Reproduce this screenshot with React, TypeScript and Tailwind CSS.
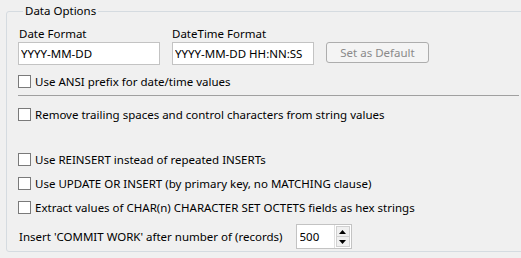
import { useState } from 'react';

const font = { fontFamily: '"Noto Sans", "Open Sans", sans-serif' };

function Check({ label }: { label: string }) {
  const [on, setOn] = useState(false);
  return (
    <label className="flex h-[13px] items-center gap-[4px] whitespace-nowrap">
      <span
        onClick={() => setOn(!on)}
        className="flex h-[13px] w-[13px] shrink-0 items-center justify-center border border-[#7a7a7a] bg-white text-[10px] leading-none"
      >
        {on ? '✓' : ''}
      </span>
      <span className="leading-[16px]">{label}</span>
    </label>
  );
}

export default function App() {
  return (
    <div
      className="h-[258px] w-[521px] overflow-hidden bg-[#f0f0f0] text-[11.5px] text-black"
      style={font}
    >
      <fieldset className="ml-[6px] mt-[3px] h-[249px] w-[540px] rounded-[3px] border border-[#d5dbe0] pl-[11px]">
        <legend className="ml-[5px] px-[2px] leading-[16px]">Data Options</legend>

        <div className="mt-[6px] flex items-end gap-[12px]">
          <div className="flex flex-col">
            <span className="pl-[1px] leading-[17px]">Date Format</span>
            <input
              defaultValue="YYYY-MM-DD"
              className="h-[23px] w-[142px] border border-[#c3c3c3] bg-white px-[2px] text-[11.5px] outline-none"
            />
          </div>
          <div className="flex flex-col">
            <span className="leading-[17px]">DateTime Format</span>
            <input
              defaultValue="YYYY-MM-DD HH:NN:SS"
              className="h-[23px] w-[142px] border border-[#c3c3c3] bg-white px-[2px] text-[11.5px] outline-none"
            />
          </div>
          <button
            disabled
            className="mb-[2px] h-[21px] w-[103px] rounded-[3px] border border-[#adadad] bg-[#f4f4f4] text-[#8a8a8a]"
          >
            Set as Default
          </button>
        </div>

        <div className="mt-[10px]">
          <Check label="Use ANSI prefix for date/time values" />
        </div>

        <div className="mt-[7px] h-px w-[501px] bg-[#a0a0a0]" />

        <div className="mt-[12px]">
          <Check label="Remove trailing spaces and control characters from string values" />
        </div>

        <div className="mt-[32px] flex flex-col gap-[11px]">
          <Check label="Use REINSERT instead of repeated INSERTs" />
          <Check label="Use UPDATE OR INSERT (by primary key, no MATCHING clause)" />
          <Check label="Extract values of CHAR(n) CHARACTER SET OCTETS fields as hex strings" />
        </div>

        <div className="mt-[10px] flex items-center gap-[13px]">
          <span className="pl-[1px]">Insert 'COMMIT WORK' after number of (records)</span>
          <div className="flex h-[25px] w-[56px] border border-[#c3c3c3] bg-white">
            <input defaultValue="500" className="w-[37px] px-[3px] text-[11.5px] outline-none" />
            <div className="flex w-[17px] flex-col border-l border-[#e0e0e0] p-[1px]">
              <div className="flex flex-1 items-center justify-center border border-[#d0d0d0] bg-[#f0f0f0]">
                <svg width="7" height="4" viewBox="0 0 7 4">
                  <path d="M3.5 0L7 4H0Z" fill="#000" />
                </svg>
              </div>
              <div className="flex flex-1 items-center justify-center border border-t-0 border-[#d0d0d0] bg-[#f0f0f0]">
                <svg width="7" height="4" viewBox="0 0 7 4">
                  <path d="M0 0H7L3.5 4Z" fill="#000" />
                </svg>
              </div>
            </div>
          </div>
        </div>
      </fieldset>
    </div>
  );
}
